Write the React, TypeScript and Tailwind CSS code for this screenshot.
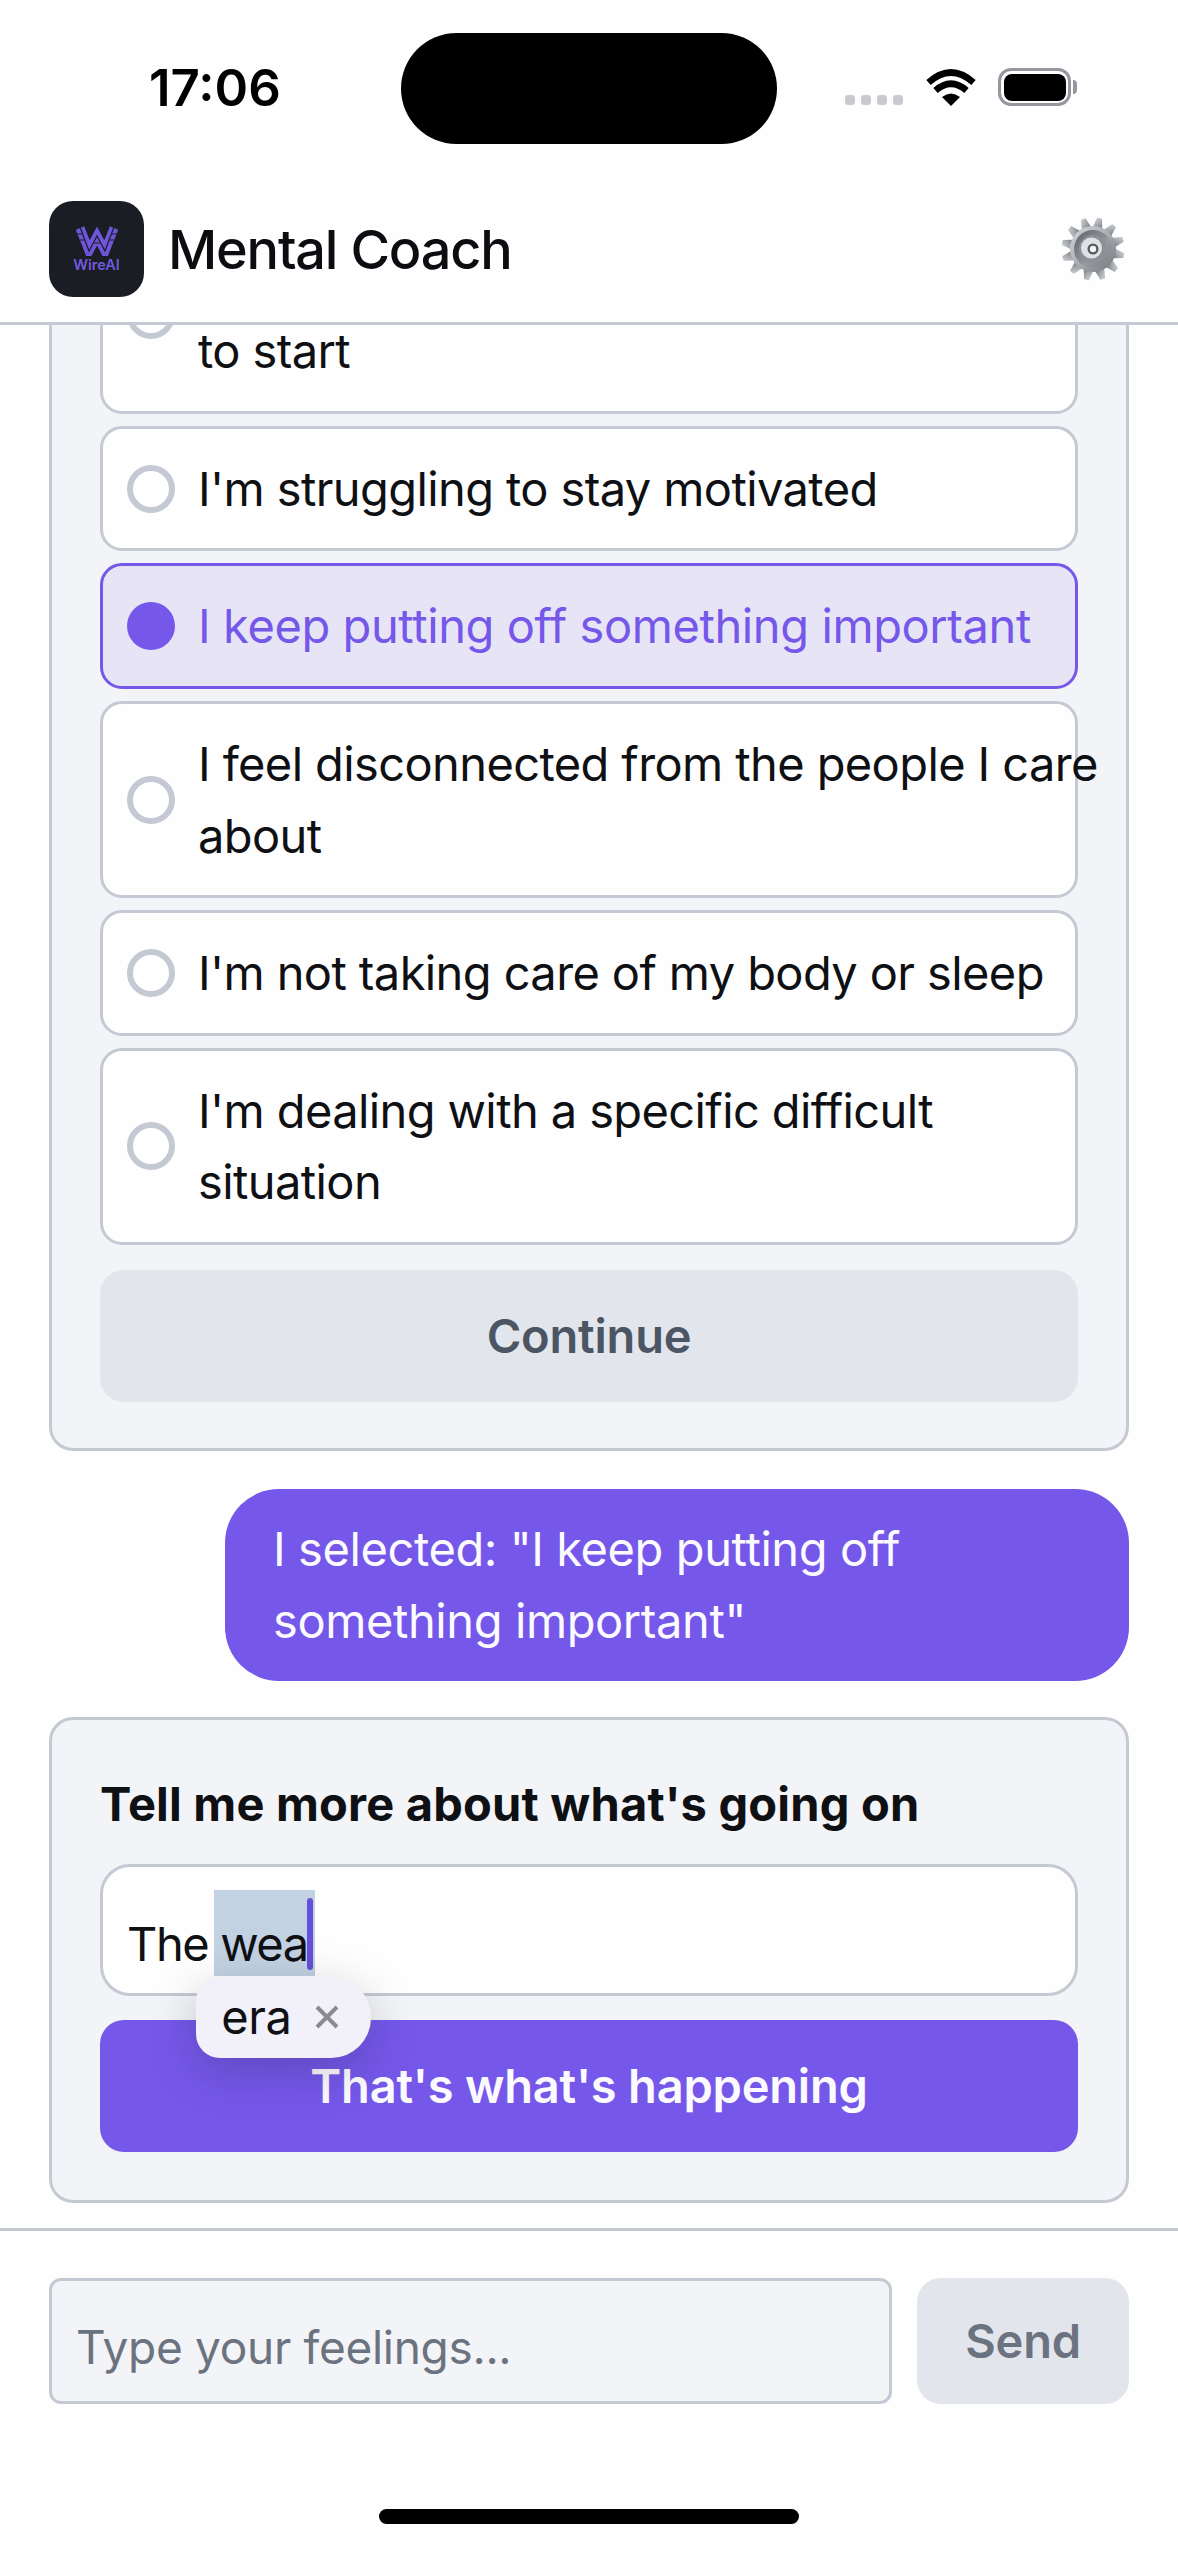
import React from "react";

const border = "border-[3px] border-[#c5c9d3]";

function Option({ lines, selected }: { lines: string[]; selected?: boolean }) {
  return (
    <div
      className={`flex items-center gap-[23px] rounded-[22px] border-[3px] px-[24px] py-[24px] leading-[71.6px] ${
        selected ? "border-[#7558ea] bg-[#e7e4f5] tracking-[-0.4px] text-[#7558ea]" : "border-[#c5c9d3] bg-[#fefefe] tracking-[-0.6px] text-[#0e1014]"
      }`}
    >
      {selected ? (
        <div className="h-[48px] w-[48px] shrink-0 rounded-full bg-[#7558ea]" />
      ) : (
        <div className="h-[48px] w-[48px] shrink-0 rounded-full border-[6px] border-[#c5c9d3] bg-white" />
      )}
      <div className="whitespace-nowrap">
        {lines.map((l) => (
          <div key={l}>{l}</div>
        ))}
      </div>
    </div>
  );
}

function Wifi() {
  return (
    <svg width="50" height="38" viewBox="0 0 50 38">
      <path d="M25 38 L16 29 Q25 22 34 29 Z" fill="#000" />
      <path d="M9.5 22.5 Q25 9 40.5 22.5" fill="none" stroke="#000" strokeWidth="6.5" />
      <path d="M2.5 14.5 Q25 -5.5 47.5 14.5" fill="none" stroke="#000" strokeWidth="6.5" />
    </svg>
  );
}

function Gear() {
  const teeth = Array.from({ length: 12 }, (_, i) => i * 30);
  return (
    <svg width="66" height="66" viewBox="0 0 66 66">
      <defs>
        <linearGradient id="gearBody" x1="0" y1="0" x2="1" y2="1">
          <stop offset="0" stopColor="#d5dade" />
          <stop offset="0.55" stopColor="#a5a8ad" />
          <stop offset="1" stopColor="#707378" />
        </linearGradient>
        <linearGradient id="gearInner" x1="0" y1="0" x2="1" y2="1">
          <stop offset="0" stopColor="#5f6268" />
          <stop offset="0.6" stopColor="#96999e" />
          <stop offset="1" stopColor="#7c7f84" />
        </linearGradient>
      </defs>
      {teeth.map((a) => (
        <path key={a} d="M28 12 L30.5 1.5 L35.5 1.5 L38 12 Z" fill="url(#gearBody)" transform={`rotate(${a + 12} 33 33)`} />
      ))}
      <circle cx="33" cy="33" r="23" fill="url(#gearBody)" />
      <circle cx="33" cy="33" r="19" fill="url(#gearInner)" />
      <circle cx="33" cy="33" r="14" fill="#8d9095" />
      <circle cx="31.5" cy="32" r="10.5" fill="#dfe2e5" />
      <circle cx="33" cy="33" r="5.5" fill="#55585d" />
      <circle cx="33" cy="33" r="3.2" fill="#f4f5f6" />
    </svg>
  );
}

function Logo() {
  return (
    <div className="flex h-[96px] w-[95px] shrink-0 flex-col items-center rounded-[24px] bg-[#1a1d24] pt-[25px]">
      <svg width="44" height="30" viewBox="0 0 44 30" fill="none" strokeLinejoin="miter">
        <path d="M5 2 L14 25 L22 10 L30 25 L39 2" stroke="#6f55d8" strokeWidth="9" />
        <path d="M5 1 L14 25 L22 10 L30 25 L39 1" stroke="#1a1d24" strokeWidth="1.2" />
        <path d="M1.5 8 L7 8 M5 14 L10 14 M34 14 L39 14 M37 8 L42.5 8 M19 17 L25 17" stroke="#1a1d24" strokeWidth="1" />
      </svg>
      <div className="mt-[1px] text-[14.5px] leading-[16px] font-semibold tracking-[0px] text-[#7259dc]">WireAI</div>
    </div>
  );
}

export default function App() {
  return (
    <div
      className="flex h-[2556px] w-[1178px] flex-col overflow-hidden bg-[#fefefe] text-[47px] leading-[72px] tracking-[-0.4px] text-[#0e1014]"
      style={{ fontFamily: "Inter, sans-serif" }}
    >
      {/* status bar */}
      <div className="flex h-[144px] shrink-0 items-start pt-[33px]">
        <div className="w-[401px] pt-[21px] pl-[149px] text-[51px] leading-[68px] font-semibold tracking-[0px] text-black">17:06</div>
        <div className="h-[111px] w-[376px] rounded-full bg-black" />
        <div className="flex items-end pt-[35px] pl-[68px]">
          <div className="flex gap-[6px] pb-[1px]">
            {[0, 1, 2, 3].map((i) => (
              <div key={i} className="h-[10px] w-[10px] rounded-[3px] bg-[#c9cacf]" />
            ))}
          </div>
          <div className="ml-[23px]">
            <Wifi />
          </div>
          <div className="ml-[22px] flex items-center">
            <div className="flex h-[38px] w-[73px] items-center justify-center rounded-[13px] border-[3px] border-[#96969e] bg-white">
              <div className="h-[27px] w-[62px] rounded-[8px] bg-black" />
            </div>
            <div className="ml-[2px] h-[14px] w-[4px] rounded-r-full bg-[#96969e]" />
          </div>
        </div>
      </div>

      {/* app header */}
      <div className="flex h-[181px] shrink-0 items-start justify-between border-b-[3px] border-[#c5c9d3] pt-[57px] pr-[52px] pl-[49px]">
        <div className="flex items-center gap-[24px]">
          <Logo />
          <div className="pt-[2px] text-[54px] leading-[72px] font-medium tracking-[-1.2px] text-[#0c0d11]">Mental Coach</div>
        </div>
        <div className="pt-[15px]">
          <Gear />
        </div>
      </div>

      {/* messages */}
      <div className="flex min-h-0 flex-1 flex-col justify-end overflow-hidden px-[49px] pb-[25px]">
        <div className={`shrink-0 rounded-[24px] ${border} bg-[#f3f4f7] px-[48px] pt-[48px] pb-[46px]`}>
          <div className="flex flex-col gap-[12px]">
            <Option lines={["I'm feeling overwhelmed and don't know where", "to start"]} />
            <Option lines={["I'm struggling to stay motivated"]} />
            <Option lines={["I keep putting off something important"]} selected />
            <Option lines={["I feel disconnected from the people I care", "about"]} />
            <Option lines={["I'm not taking care of my body or sleep"]} />
            <Option lines={["I'm dealing with a specific difficult", "situation"]} />
          </div>
          <div className="mt-[25px] flex h-[132px] items-center justify-center rounded-[24px] bg-[#e2e5ec] font-semibold tracking-[-0.2px] text-[#4b5563]">Continue</div>
        </div>

        <div className="mt-[38px] flex shrink-0 justify-end">
          <div className="w-[904px] rounded-[54px] bg-[#7558ea] px-[48px] py-[24px] text-[#fbfaff]">
            <div>I selected: "I keep putting off</div>
            <div>something important"</div>
          </div>
        </div>

        <div className={`mt-[36px] shrink-0 rounded-[24px] ${border} bg-[#f3f4f7] p-[48px]`}>
          <div className="font-bold tracking-[0.2px] text-[#0e1014]">Tell me more about what's going on</div>
          <div className={`relative z-10 mt-[24px] flex h-[132px] items-center rounded-[30px] ${border} bg-[#fefefe] px-[24px] pt-[27px] tracking-[-1.4px]`}>
            <span className="whitespace-pre">The </span>
            <span className="relative">
              <span className="absolute top-[-18px] right-[-7px] bottom-[4px] left-[-6px] bg-[#c2d2e3]" />
              <span className="relative">wea</span>
              <span className="absolute top-[-10px] right-[-5px] h-[72px] w-[6px] rounded-full bg-[#6650d8]" />
              <span className="absolute top-[69px] left-[-24px] flex h-[81px] w-[175px] items-center rounded-l-[24px] rounded-r-[40px] bg-[#f2f1f9] pl-[25px] tracking-[-0.4px] shadow-[0_12px_50px_rgba(0,0,0,0.2)]">
                <span>era</span>
                <svg className="ml-[24px] shrink-0" width="24" height="24" viewBox="0 0 24 24" fill="none" stroke="#8a8b90" strokeWidth="4">
                  <path d="M2 2 L22 22 M22 2 L2 22" />
                </svg>
              </span>
            </span>
          </div>
          <div className="mt-[24px] flex h-[132px] items-center justify-center rounded-[24px] bg-[#7558ea] font-semibold tracking-[-0.2px] text-[#fbfaff]">That's what's happening</div>
        </div>
      </div>

      {/* bottom composer */}
      <div className="flex h-[328px] shrink-0 flex-col border-t-[3px] border-[#c5c9d3] px-[49px] pt-[47px]">
        <div className="flex gap-[25px]">
          <div className={`flex h-[126px] flex-1 items-center rounded-[12px] ${border} bg-[#f3f4f7] px-[24px] pt-[12px] text-[46px] tracking-[-0.3px] text-[#6b7280]`}>Type your feelings...</div>
          <div className="flex h-[126px] w-[212px] items-center justify-center rounded-[24px] bg-[#e2e5ec] font-semibold tracking-[-0.2px] text-[#6b7280]">Send</div>
        </div>
        <div className="mt-[105px] h-[15px] w-[420px] self-center rounded-full bg-black" />
      </div>
    </div>
  );
}
